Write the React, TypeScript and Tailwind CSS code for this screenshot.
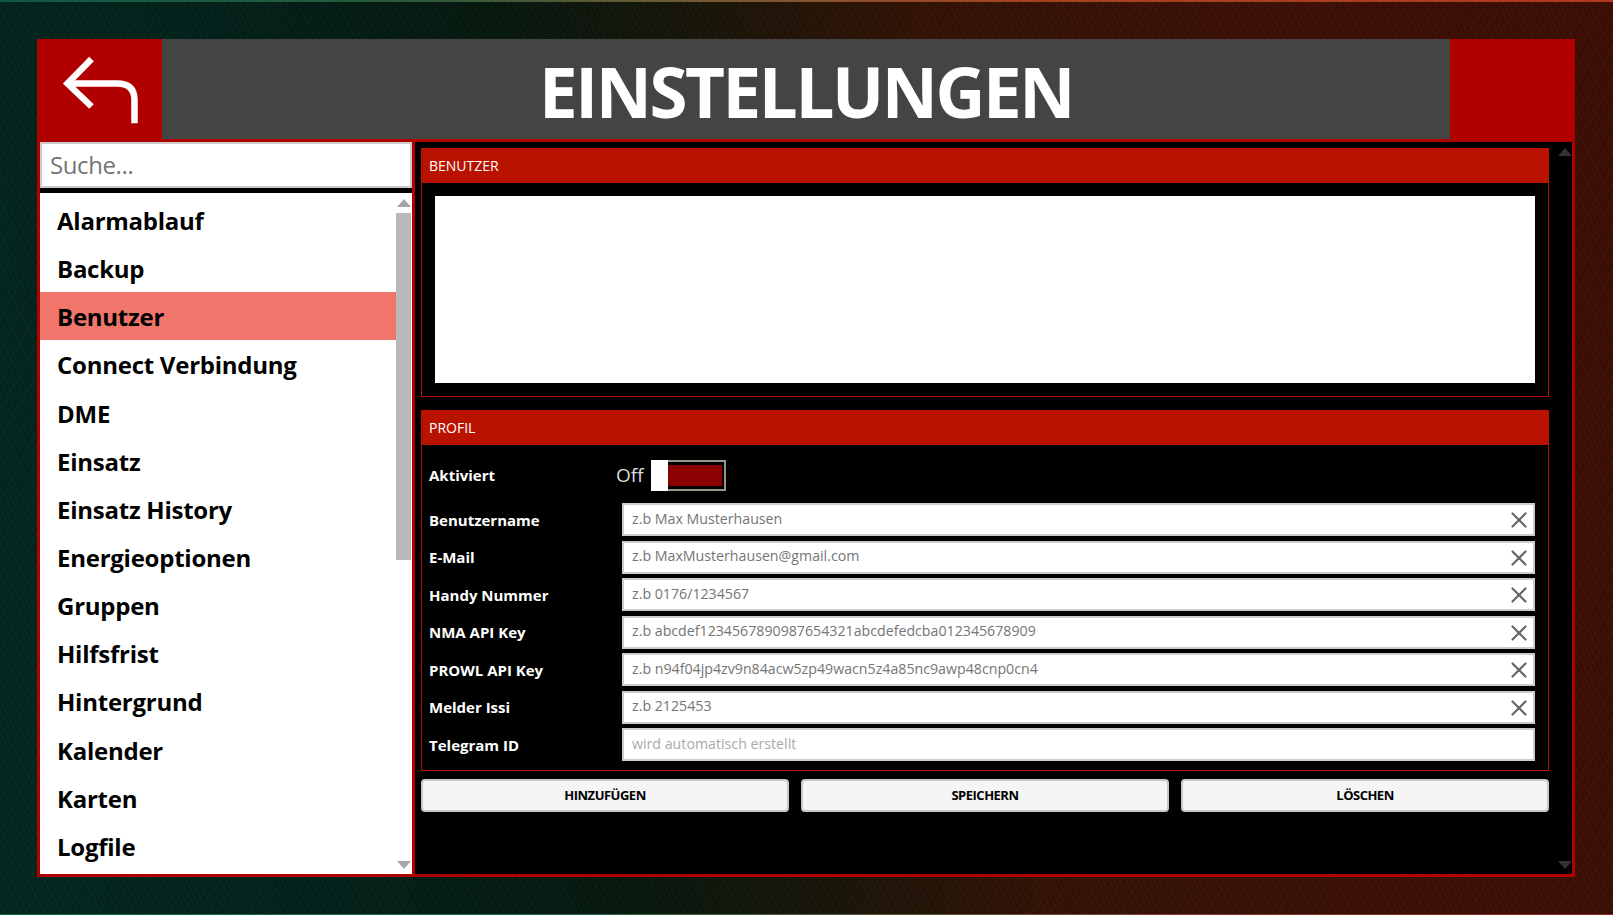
import React from 'react';
import { X } from 'lucide-react';

const menu = [
  'Alarmablauf',
  'Backup',
  'Benutzer',
  'Connect Verbindung',
  'DME',
  'Einsatz',
  'Einsatz History',
  'Energieoptionen',
  'Gruppen',
  'Hilfsfrist',
  'Hintergrund',
  'Kalender',
  'Karten',
  'Logfile',
];

const fields = [
  { label: 'Benutzername', hint: 'z.b Max Musterhausen' },
  { label: 'E-Mail', hint: 'z.b MaxMusterhausen@gmail.com' },
  { label: 'Handy Nummer', hint: 'z.b 0176/1234567' },
  { label: 'NMA API Key', hint: 'z.b abcdef1234567890987654321abcdefedcba012345678909' },
  { label: 'PROWL API Key', hint: 'z.b n94f04jp4zv9n84acw5zp49wacn5z4a85nc9awp48cnp0cn4' },
  { label: 'Melder Issi', hint: 'z.b 2125453' },
];

const font = "font-['Open_Sans','Noto_Sans',sans-serif]";

const SectionHead = ({ title }: { title: string }) => (
  <div className="h-[34px] bg-[#b91200] text-white text-[14px] leading-[33px] px-[7px]">{title}</div>
);

const Field = ({ label, hint }: { label: string; hint: string }) => (
  <div className="flex items-center h-[33px]">
    <div className="w-[193px] text-white text-[15px] font-bold pt-px">{label}</div>
    <div className="flex-1 h-[33px] flex items-center bg-white border-2 border-[#cccccc]">
      <input
        readOnly
        placeholder={hint}
        className="flex-1 min-w-0 h-full pl-[8px] pb-[3px] text-[14.2px] bg-white outline-none placeholder:text-[#757575]"
      />
      <X className="w-[26px] h-[26px] mr-px mt-px text-[#666666]" strokeWidth={2} />
    </div>
  </div>
);

export default function App() {
  return (
    <div className={`${font} w-[1613px] h-[915px] overflow-hidden flex flex-col bg-[repeating-linear-gradient(62deg,rgba(255,255,255,0.025)_0px,rgba(255,255,255,0.025)_1px,transparent_1px,transparent_5px),repeating-linear-gradient(118deg,rgba(0,0,0,0.16)_0px,rgba(0,0,0,0.16)_1px,transparent_1px,transparent_7px),linear-gradient(82deg,#03281f_0%,#03211a_20%,#07190f_36%,#1a1509_48%,#331306_60%,#3c1005_80%,#3c0e05_100%)]`}>
      {/* Bright edge of the wallpaper */}
      <div className="h-[2px] shrink-0 bg-[linear-gradient(90deg,#0d5a46_0%,#2a5a3c_25%,#7a5a30_45%,#a8401e_65%,#b03a1e_100%)]" />

      <div className="w-[1538px] h-[838px] mt-[37px] ml-[37px] flex flex-col bg-[#b00000] p-[3px] pt-0">
        {/* Header */}
        <div className="h-[100px] -ml-[3px] -mr-[3px] flex shrink-0">
          <div className="w-[125px] flex items-center justify-center">
            <svg width="76" height="72" viewBox="0 0 76 72" fill="none" stroke="white" strokeWidth="6.5">
              <path d="M29.5 6 L5.5 30.5 L29.5 53.5" />
              <path d="M5.5 30.5 H55 Q72.5 30.5 72.5 47 V70.3" />
            </svg>
          </div>
          <div className="flex-1 bg-[#444444] flex items-center justify-center">
            <span className="text-white text-[69px] font-bold leading-none tracking-[-2.4px] pt-[5px]">EINSTELLUNGEN</span>
          </div>
          <div className="w-[125px]" />
        </div>

        <div className="flex flex-1 min-h-0 mt-[3px] gap-[3px]">
          {/* Left menu */}
          <div className="w-[372px] flex flex-col bg-black">
            <input
              readOnly
              placeholder="Suche..."
              className="h-[46px] shrink-0 bg-white border-2 border-[#cccccc] px-[8px] pb-[2px] text-[24px] tracking-[-0.4px] outline-none placeholder:text-[#757575]"
            />
            <div className="mt-[5px] flex-1 min-h-0 flex bg-white">
              <div className="flex-1 overflow-hidden pt-[3px]">
                {menu.map((item) => (
                  <div
                    key={item}
                    className={`h-[48.15px] leading-[50px] pl-[17px] text-black text-[24px] font-bold tracking-[-0.25px] ${item === 'Benutzer' ? 'bg-[#f1756a]' : ''}`}
                  >
                    {item}
                  </div>
                ))}
              </div>
              <div className="w-[15px] mr-px flex flex-col items-center">
                <div className="mt-[6px] w-0 h-0 border-x-[7.5px] border-x-transparent border-b-[8px] border-b-[#a6a6a6]" />
                <div className="mt-[6px] w-full h-[347px] bg-[#b9b9b9]" />
                <div className="mt-auto mb-[5px] w-0 h-0 border-x-[7.5px] border-x-transparent border-t-[8px] border-t-[#a6a6a6]" />
              </div>
            </div>
          </div>

          {/* Right content */}
          <div className="flex-1 flex bg-black">
            <div className="w-[1128px] ml-[6px] pt-[6px]">
              <div className="h-[249px] border border-[#b91200]">
                <SectionHead title="BENUTZER" />
                <div className="mx-[13px] mt-[13px] h-[187px] bg-white" />
              </div>

              <div className="mt-[13px] h-[361px] border border-[#b91200]">
                <SectionHead title="PROFIL" />
                <div className="pl-[7px] pr-[13px]">
                  <div className="flex items-center h-[31px] mt-[15px] mb-[12px]">
                    <div className="w-[187px] text-white text-[15px] font-bold">Aktiviert</div>
                    <div className="text-[#dddddd] text-[19px] w-[35px]">Off</div>
                    <div className="relative w-[75px] h-[31px] border-2 border-[#9a9488] bg-black py-[3px] pr-[2px]">
                      <div className="h-full bg-[#8b0000]" />
                      <div className="absolute -left-[2px] -top-[2px] w-[17px] h-[31px] bg-white" />
                    </div>
                  </div>
                  <div className="flex flex-col gap-[4.5px]">
                    {fields.map((f) => (
                      <Field key={f.label} label={f.label} hint={f.hint} />
                    ))}
                    <div className="flex items-center h-[33px]">
                      <div className="w-[193px] text-white text-[15px] font-bold pt-px">Telegram ID</div>
                      <input
                        readOnly
                        placeholder="wird automatisch erstellt"
                        className="flex-1 h-[33px] pl-[8px] pb-[3px] bg-white border-2 border-[#cccccc] text-[14.2px] outline-none placeholder:text-[#a9a9a9]"
                      />
                    </div>
                  </div>
                </div>
              </div>

              <div className="mt-[8px] flex gap-[12px]">
                {['HINZUFÜGEN', 'SPEICHERN', 'LÖSCHEN'].map((b) => (
                  <button
                    key={b}
                    className="flex-1 h-[33px] bg-[#f5f5f5] border-2 border-[#c8c8c8] rounded-[4px] text-black text-[13px] font-bold tracking-[-0.5px]"
                  >
                    {b}
                  </button>
                ))}
              </div>
            </div>

            <div className="flex-1 flex flex-col items-end">
              <div className="mt-[6px] w-0 h-0 border-x-[7.5px] border-x-transparent border-b-[8px] border-b-[#333333]" />
              <div className="mt-auto mb-[5px] w-0 h-0 border-x-[7.5px] border-x-transparent border-t-[8px] border-t-[#333333]" />
            </div>
          </div>
        </div>
      </div>

      <div className="h-px mt-auto shrink-0 bg-[linear-gradient(90deg,#0f6a50_0%,#1a6a4c_30%,#5a5a3a_55%,#8a3a22_75%,#8a2a1a_100%)]" />
    </div>
  );
}
